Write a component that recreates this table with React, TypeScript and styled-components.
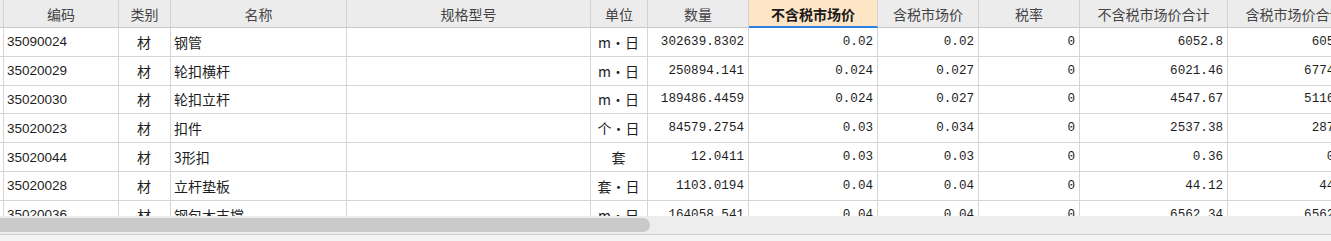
import styled, { createGlobalStyle } from 'styled-components';

const GlobalStyle = createGlobalStyle`
  html, body {
    margin: 0;
    padding: 0;
    background: #ffffff;
    overflow: hidden;
  }
`;

type Align = 'left' | 'center' | 'right';
type Kind = 'lead' | 'code' | 'cjk' | 'num';

interface Column {
  title: string;
  width: number;
  align: Align;
  kind: Kind;
  active?: boolean;
}

const columns: Column[] = [
  { title: '', width: 4, align: 'left', kind: 'lead' },
  { title: '编码', width: 115, align: 'left', kind: 'code' },
  { title: '类别', width: 52, align: 'center', kind: 'cjk' },
  { title: '名称', width: 176, align: 'left', kind: 'cjk' },
  { title: '规格型号', width: 244, align: 'left', kind: 'cjk' },
  { title: '单位', width: 57, align: 'center', kind: 'cjk' },
  { title: '数量', width: 101, align: 'right', kind: 'num' },
  { title: '不含税市场价', width: 129, align: 'right', kind: 'num', active: true },
  { title: '含税市场价', width: 101, align: 'right', kind: 'num' },
  { title: '税率', width: 101, align: 'right', kind: 'num' },
  { title: '不含税市场价合计', width: 148, align: 'right', kind: 'num' },
  { title: '含税市场价合计', width: 134, align: 'right', kind: 'num' },
];

const rows: string[][] = [
  ['', '35090024', '材', '钢管', '', 'm·日', '302639.8302', '0.02', '0.02', '0', '6052.8', '6052.8'],
  ['', '35020029', '材', '轮扣横杆', '', 'm·日', '250894.141', '0.024', '0.027', '0', '6021.46', '6774.14'],
  ['', '35020030', '材', '轮扣立杆', '', 'm·日', '189486.4459', '0.024', '0.027', '0', '4547.67', '5116.13'],
  ['', '35020023', '材', '扣件', '', '个·日', '84579.2754', '0.03', '0.034', '0', '2537.38', '2875.7'],
  ['', '35020044', '材', '3形扣', '', '套', '12.0411', '0.03', '0.03', '0', '0.36', '0.36'],
  ['', '35020028', '材', '立杆垫板', '', '套·日', '1103.0194', '0.04', '0.04', '0', '44.12', '44.12'],
  ['', '35020036', '材', '钢包木支撑', '', 'm·日', '164058.541', '0.04', '0.04', '0', '6562.34', '6562.34'],
];

const fonts: Record<Kind, string> = {
  lead: `12px 'Liberation Sans', sans-serif`,
  code: `13.5px 'Liberation Sans', Arial, sans-serif`,
  cjk: `14px 'Noto Sans CJK SC', sans-serif`,
  num: `12.6px 'Liberation Mono', 'Noto Sans CJK SC', monospace`,
};

const Frame = styled.div`
  width: 1331px;
  height: 241px;
  display: flex;
  flex-direction: column;
  overflow: hidden;
  background: #ffffff;
`;

const Viewport = styled.div`
  height: 216px;
  overflow: hidden;
  flex: none;
`;

const Row = styled.div`
  display: flex;
  width: max-content;
`;

const HeaderCell = styled.div<{ $w: number; $active?: boolean }>`
  box-sizing: border-box;
  flex: none;
  width: ${(p) => p.$w}px;
  height: 28px;
  display: flex;
  align-items: center;
  justify-content: center;
  background: ${(p) => (p.$active ? '#fde5c6' : '#ececec')};
  border-right: 1px solid #d2d2d2;
  border-bottom: ${(p) => (p.$active ? '2px solid #2f80e6' : '1px solid #c9c9c9')};
  padding-top: ${(p) => (p.$active ? '1px' : '0')};
  font: 14px 'Noto Sans CJK SC', sans-serif;
  font-weight: ${(p) => (p.$active ? 700 : 400)};
  color: ${(p) => (p.$active ? '#1a1a1a' : '#444444')};
  white-space: nowrap;
  overflow: hidden;
`;

const Cell = styled.div<{ $w: number; $align: Align; $kind: Kind }>`
  box-sizing: border-box;
  flex: none;
  width: ${(p) => p.$w}px;
  height: 28.8px;
  display: flex;
  align-items: center;
  justify-content: ${(p) =>
    p.$align === 'left' ? 'flex-start' : p.$align === 'right' ? 'flex-end' : 'center'};
  padding: ${(p) => (p.$kind === 'lead' ? '0' : '0 4px 0 3px')};
  border-right: 1px solid #d6d6d6;
  border-bottom: 1px solid #d6d6d6;
  font: ${(p) => fonts[p.$kind]};
  color: #1e1e1e;
  white-space: nowrap;
  overflow: hidden;
`;

const Track = styled.div`
  flex: none;
  height: 19px;
  box-sizing: border-box;
  background: #ededed;
  border-bottom: 1px solid #cfcfcf;
  padding: 2px 0;
  display: flex;
`;

const Thumb = styled.div`
  width: 650px;
  height: 14px;
  background: #c9c9c9;
  border-radius: 0 8px 8px 0;
`;

const Footer = styled.div`
  flex: 1;
  background: #f4f4f4;
`;

export default function App() {
  return (
    <>
      <GlobalStyle />
      <Frame>
        <Viewport>
          <Row>
            {columns.map((c, i) => (
              <HeaderCell key={i} $w={c.width} $active={c.active}>
                {c.title}
              </HeaderCell>
            ))}
          </Row>
          {rows.map((r, ri) => (
            <Row key={ri}>
              {r.map((v, ci) => (
                <Cell
                  key={ci}
                  $w={columns[ci].width}
                  $align={columns[ci].align}
                  $kind={columns[ci].kind}
                >
                  {v}
                </Cell>
              ))}
            </Row>
          ))}
        </Viewport>
        <Track>
          <Thumb />
        </Track>
        <Footer />
      </Frame>
    </>
  );
}
